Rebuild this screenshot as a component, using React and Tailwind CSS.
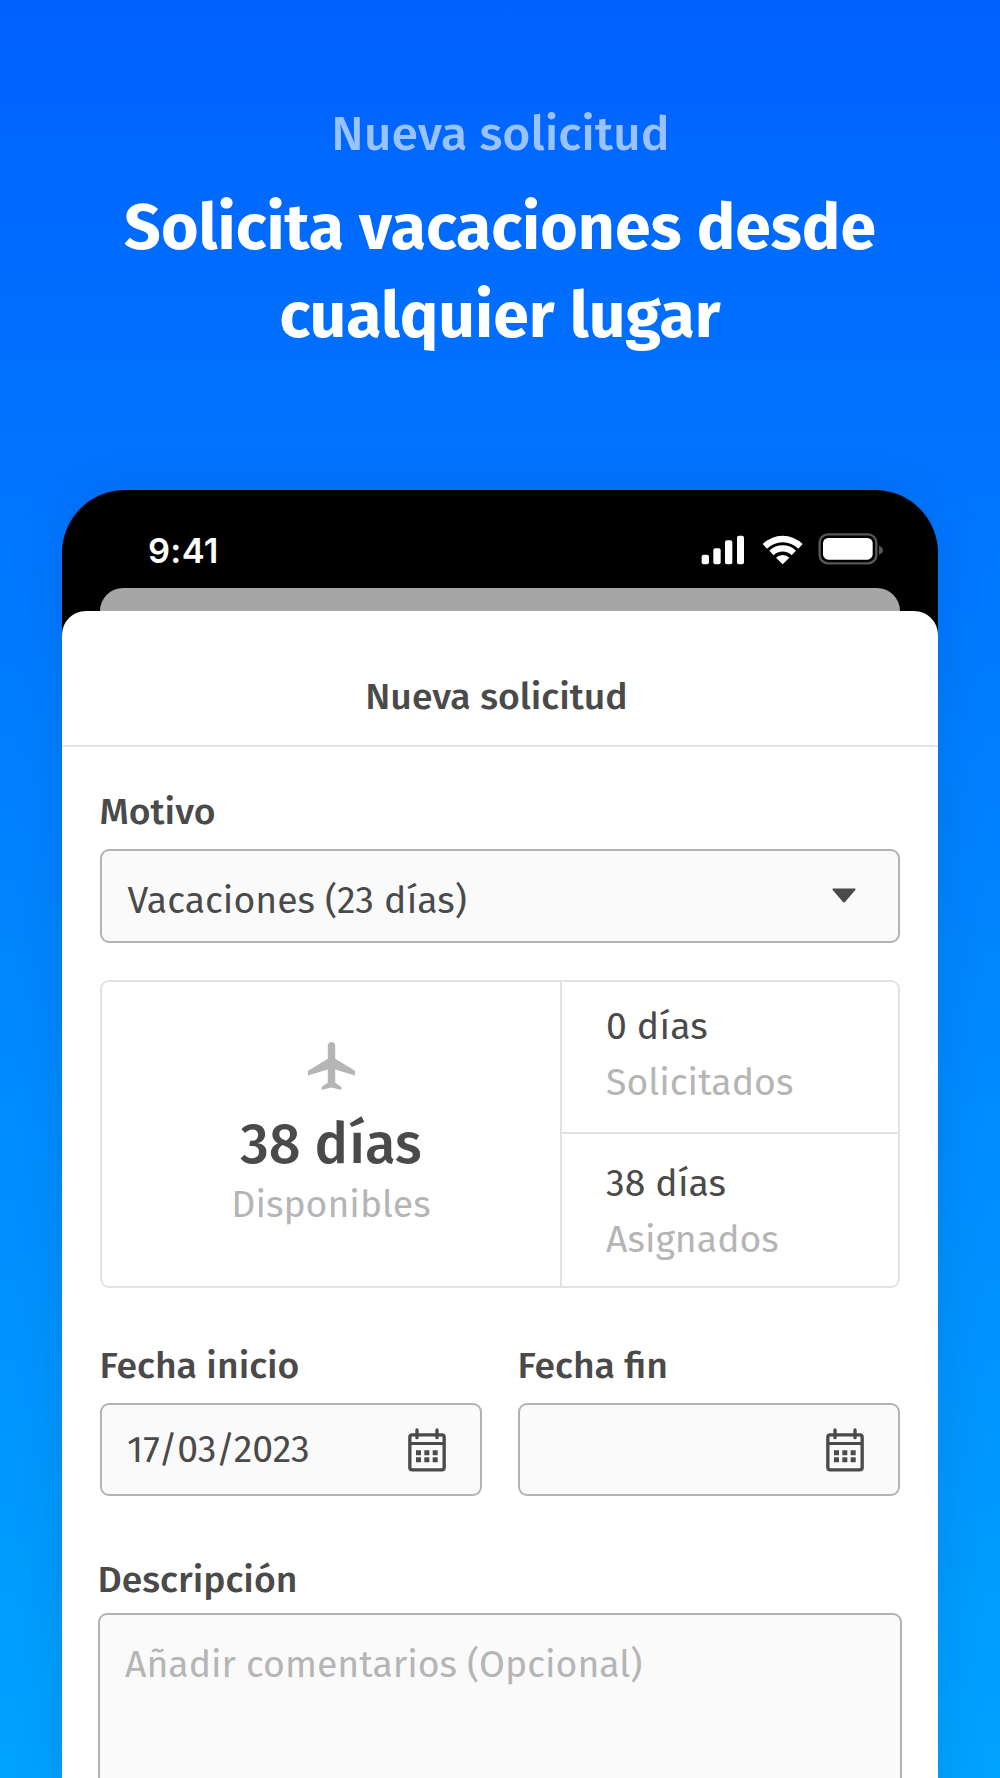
function StatusIcons() {
  return (
    <svg className="mt-[43.5px] h-[32px] w-[184px]" viewBox="120 190 552 96" fill="#fff">
      <rect x="125" y="255" width="22" height="29" rx="6" />
      <rect x="160" y="236" width="22" height="48" rx="6" />
      <rect x="195" y="212" width="22" height="72" rx="6" />
      <rect x="231" y="198" width="21" height="86" rx="6" />
      {/* wifi */}
      <path d="M308 223a86 86 0 0 1 120 0l-13 14a67 67 0 0 0-94 0z" />
      <path d="M328 243a57 57 0 0 1 80 0l-13 14a38 38 0 0 0-54 0z" />
      <path d="M348 264a29 29 0 0 1 40 0l-20 20z" />
      {/* battery */}
      <rect x="479" y="194" width="170" height="87" rx="25" fill="none" stroke="#585858" strokeWidth="7" />
      <rect x="489" y="205" width="149" height="65" rx="16" />
      <path d="M657 228c7 2 12 7 12 13.500s-5 11.500-12 13.500z" fill="#585858" />
    </svg>
  )
}

function PlaneIcon() {
  return (
    <svg className="h-[48px] w-[47px]" viewBox="2 2 19 20" preserveAspectRatio="none" fill="#b5b5b5">
      <path d="M21 16v-2l-8-5V3.500C13 2.670 12.330 2 11.500 2S10 2.670 10 3.500V9l-8 5v2l8-2.500V19l-2.500 1.800V22l4-1 4 1v-1.200L13 19v-5.500z" />
    </svg>
  )
}

function CalendarIcon() {
  return (
    <svg className="h-[44px] w-[38px]" viewBox="0 0 114 132" fill="none" stroke="#4a4a4a">
      <rect x="5.500" y="20.500" width="103" height="105" rx="7" strokeWidth="10" />
      <path d="M5 46.500h104" strokeWidth="9" />
      <path d="M27 6v23M87 6v23" strokeWidth="10" strokeLinecap="round" />
      <path d="M24 74h15M49 74h15M74 74h15M24 95h15M49 95h15M74 95h15" strokeWidth="15" />
    </svg>
  )
}

function DateField({ label, value }) {
  return (
    <div>
      <label className="-ml-[0.5px] block leading-[40px] font-medium">{label}</label>
      <div className="mt-[17px] flex h-[93px] justify-between rounded-[9px] border-2 border-[#b3b3b3] bg-[#fafafa] pr-[34.5px] pl-[25px]">
        <span className="pt-[25px] leading-[40px]">{value}</span>
        <span className="pt-[22.5px]">
          <CalendarIcon />
        </span>
      </div>
    </div>
  )
}

export default function App() {
  return (
    <div className="h-[1778px] w-[1000px] overflow-hidden bg-linear-to-b from-[#0061ff] to-[#00a2ff] pt-[104px] font-['Fira_Sans','Noto_Sans',sans-serif]">
      <p className="pl-px text-center text-[48.2px] leading-[60px] font-medium text-[#99c2ff]">Nueva solicitud</p>
      <h1 className="mt-[20px] text-center text-[64.3px] leading-[88px] font-bold text-white">
        Solicita vacaciones desde
        <br />
        cualquier lugar
      </h1>

      <div className="mx-[62px] mt-[129.5px] rounded-t-[63px] bg-black shadow-[0_0_50px_rgba(0,0,0,0.1)]">
        <div className="flex h-[98px] justify-between pr-[54px] pl-[86px]">
          <span className="mt-[40px] font-['Inter',sans-serif] text-[34.5px] leading-[42px] font-semibold tracking-[0.3px] text-white">9:41</span>
          <StatusIcons />
        </div>
        <div className="mx-[38px] h-[23.5px] rounded-t-[23.5px] bg-[#a6a6a6]" />

        <div className="h-[1200px] rounded-t-[24px] bg-white text-[37.4px] text-[#4a4a4a]">
          <div className="h-[136px] border-b-2 border-[#e4e4e4] pt-[66px] pr-[7px] text-center">
            <h2 className="leading-[40px] font-medium">Nueva solicitud</h2>
          </div>

          <div className="px-[38px] pt-[45px]">
            <label className="-ml-[0.5px] block leading-[40px] font-medium">Motivo</label>
            <div className="mt-[17px] flex h-[94px] justify-between rounded-[9px] border-2 border-[#b3b3b3] bg-[#fafafa] pr-[42px] pl-[25.5px]">
              <span className="pt-[30px] leading-[40px]">Vacaciones (23 días)</span>
              <svg className="mt-[37px] h-[15px] w-[24px]" viewBox="0 0 24 15" fill="#4a4a4a">
                <path d="M1.200.500h21.600c.8 0 1 .8.500 1.400L13 14c-.6.700-1.400.700-2 0L.700 1.900C.200 1.300.400.500 1.200.500z" />
              </svg>
            </div>

            <div className="mt-[37px] flex h-[308px] rounded-[9px] border-2 border-[#e2e2e2]">
              <div className="flex w-[460px] flex-col items-center border-r-2 border-[#e2e2e2] pt-[60px]">
                <PlaneIcon />
                <p className="mt-[25px] text-[56px] leading-[60px] font-medium">38 días</p>
                <p className="mt-[10px] leading-[40px] text-[#b5b5b5]">Disponibles</p>
              </div>
              <div className="flex-1 leading-[56px]">
                <div className="h-[152px] border-b-2 border-[#e2e2e2] pt-[17px] pl-[44px]">
                  <p>0 días</p>
                  <p className="text-[#b5b5b5]">Solicitados</p>
                </div>
                <div className="pt-[22px] pl-[44px]">
                  <p>38 días</p>
                  <p className="text-[#b5b5b5]">Asignados</p>
                </div>
              </div>
            </div>

            <div className="mt-[58px] grid grid-cols-2 gap-[36px]">
              <DateField label="Fecha inicio" value="17/03/2023" />
              <DateField label="Fecha fin" />
            </div>

            <div className="-mx-[2px] mt-[64px]">
              <label className="-ml-[0.5px] block leading-[40px] font-medium">Descripción</label>
              <div className="mt-[13px] h-[300px] rounded-[9px] border-2 border-[#b3b3b3] bg-[#fafafa] pt-[30px] pl-[25px] leading-[40px] text-[#b5b5b5]">
                Añadir comentarios (Opcional)
              </div>
            </div>
          </div>
        </div>
      </div>
    </div>
  )
}
